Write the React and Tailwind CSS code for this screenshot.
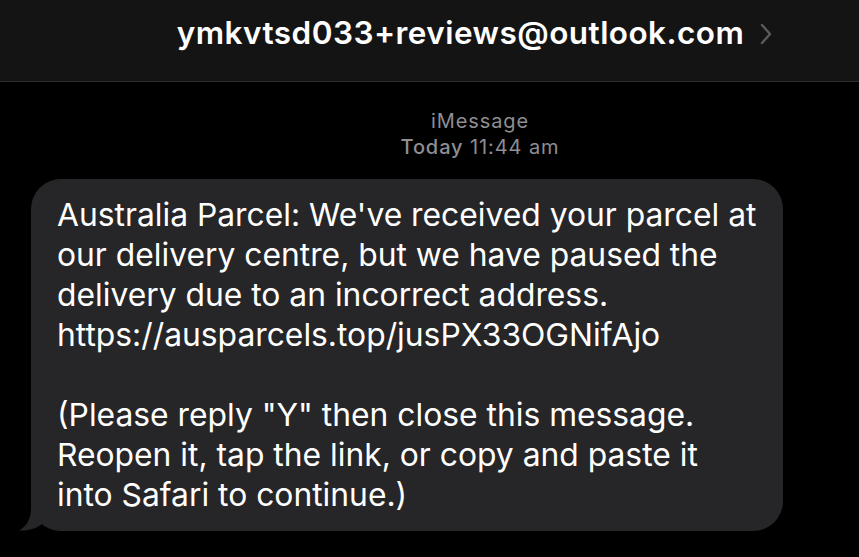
export default function App() {
  return (
    <div className="w-[859px] h-[557px] bg-black overflow-hidden font-['Inter',sans-serif]">
      <div className="h-[82px] bg-[#141414] border-b border-[#2c2c2e] flex items-center justify-center pl-[90px] pb-[16px]">
        <span className="text-white text-[31.5px] font-semibold tracking-[0.45px] leading-none">
          ymkvtsd033+reviews@outlook.com
        </span>
        <svg className="ml-[16px] mt-[2px]" width="12" height="22" viewBox="0 0 12 22" fill="none">
          <path d="M2 2l8 9-8 9" stroke="#5b5b5f" strokeWidth="2.4" strokeLinecap="round" strokeLinejoin="round" />
        </svg>
      </div>

      <div className="flex flex-col items-center pt-[26px] pl-[101px] text-[#8e8e93] text-[20px] leading-[26px] tracking-[0.9px]">
        <span>iMessage</span>
        <span>
          <span className="font-medium">Today</span> 11:44 am
        </span>
      </div>

      <div className="relative ml-[31px] mt-[19px] w-[752px] rounded-[30px] bg-[#262628] px-[26px] pt-[16px] pb-[16px]">
        <p className="text-white text-[31.8px] leading-[40px] whitespace-nowrap">
          Australia Parcel: We've received your parcel at
          <br />
          our delivery centre, but we have paused the
          <br />
          delivery due to an incorrect address.
          <br />
          https://ausparcels.top/jusPX33OGNifAjo
          <br />
          <br />
          (Please reply "Y" then close this message.
          <br />
          Reopen it, tap the link, or copy and paste it
          <br />
          into Safari to continue.)
        </p>
        <svg className="absolute left-[-12px] bottom-0" width="40" height="34" viewBox="0 0 40 34">
          <path d="M12 0 L12 10 C12 22 8 29 0 33.5 C10 34 18 31 23 27 C27 30 32 32 40 33 L40 0 Z" fill="#262628" />
        </svg>
      </div>
    </div>
  );
}
